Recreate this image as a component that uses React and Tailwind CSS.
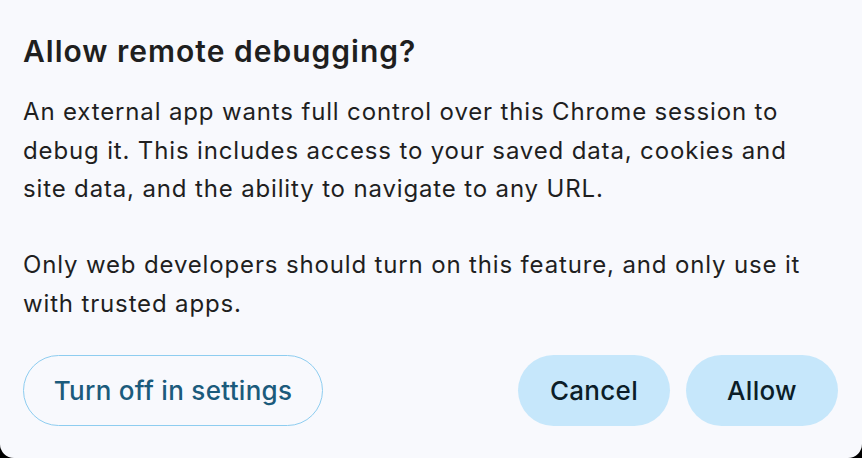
export default function App() {
  return (
    <div className="w-[862px] h-[458px] bg-black">
      <div
        className="w-full h-full bg-[#f8f9fd] rounded-b-[14px] flex flex-col pl-[23px] pr-[24px] pt-[33px] text-[#1f1f1f]"
        style={{ fontFamily: 'Inter, "Noto Sans", sans-serif' }}
      >
        <h1 className="text-[30px] leading-[36px] font-semibold tracking-[1px]">Allow remote debugging?</h1>
        <div className="mt-[24px] text-[24px] leading-[38.5px] tracking-[0.85px]">
          <p>
            <span className="block whitespace-nowrap">An external app wants full control over this Chrome session to</span>
            <span className="block whitespace-nowrap">debug it. This includes access to your saved data, cookies and</span>
            <span className="block whitespace-nowrap">site data, and the ability to navigate to any URL.</span>
          </p>
          <p className="mt-[37.5px]">
            <span className="block whitespace-nowrap">Only web developers should turn on this feature, and only use it</span>
            <span className="block whitespace-nowrap">with trusted apps.</span>
          </p>
        </div>
        <div className="mt-auto mb-[32px] flex items-center">
          <button className="h-[71px] w-[300px] rounded-full border-[1.5px] border-[#8ecdf0] text-[#1b5b7c] text-[26px] font-medium tracking-[0.3px]">
            Turn off in settings
          </button>
          <div className="ml-auto flex gap-[16px]">
            <button className="h-[71px] w-[152px] rounded-full bg-[#c6e7fb] text-[#0b1d28] text-[26px] font-medium tracking-[0.3px]">
              Cancel
            </button>
            <button className="h-[71px] w-[152px] rounded-full bg-[#c6e7fb] text-[#0b1d28] text-[26px] font-medium tracking-[0.3px]">
              Allow
            </button>
          </div>
        </div>
      </div>
    </div>
  );
}
